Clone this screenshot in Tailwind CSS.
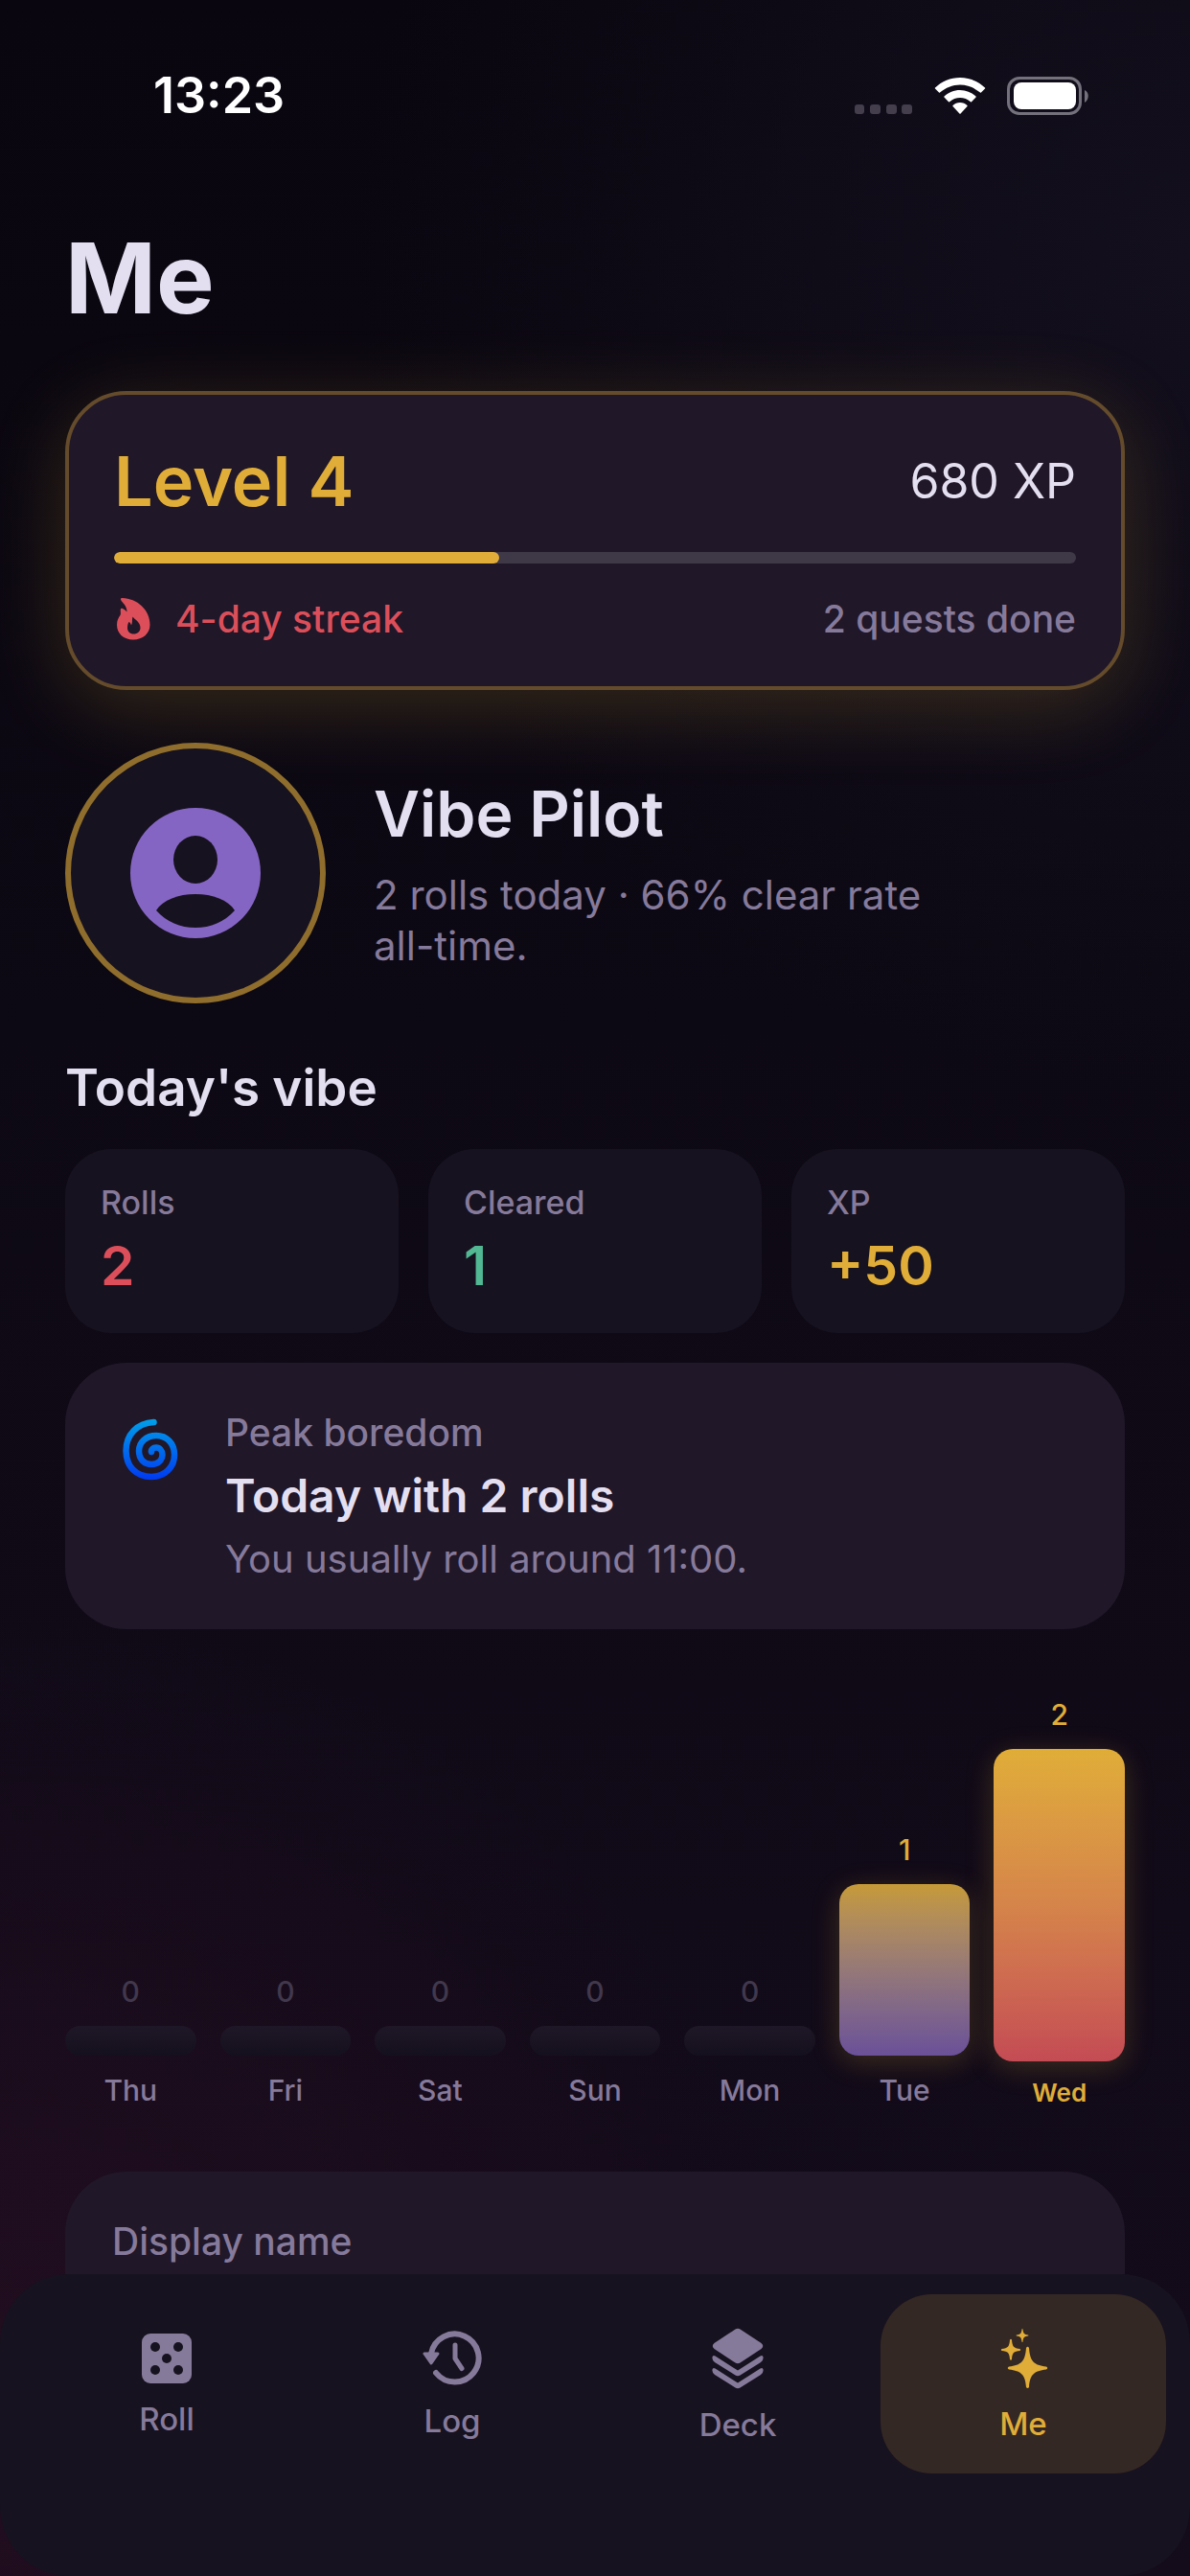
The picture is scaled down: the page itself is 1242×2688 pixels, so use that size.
<!DOCTYPE html>
<html lang="en">
<head>
    <meta charset="UTF-8">
    <meta name="viewport" content="width=device-width, initial-scale=1.0">
    <title>Me</title>
    <script src="https://cdn.jsdelivr.net/npm/@tailwindcss/browser@4"></script>
</head>
<body class="bg-[#0d0914] font-['Inter','Liberation_Sans',sans-serif] text-[#e4dff0]">

    <div class="flex h-screen flex-col overflow-hidden bg-[radial-gradient(circle_at_0%_94%,#220e20_0%,transparent_30%),radial-gradient(circle_at_100%_10%,#130f1d_0%,transparent_32%),linear-gradient(to_bottom,#09060f,#0d0914_40%,#140b1b)]">

      <!-- status bar -->
      <header class="flex shrink-0 items-center justify-between pt-[68px] pr-[105px] pl-40 text-white">
        <time class="text-[52px] leading-[64px] font-semibold">13:23</time>
        <div class="flex items-center gap-[22px]">
          <svg class="h-10 w-[62px]" viewBox="0 0 62 40" fill="#433d4c">
            <rect x="1" y="29" width="10" height="10" rx="3"/>
            <rect x="17" y="29" width="11" height="10" rx="3"/>
            <rect x="34" y="29" width="11" height="10" rx="3"/>
            <rect x="50" y="29" width="11" height="10" rx="3"/>
          </svg>
          <svg class="h-10 w-[54px]" viewBox="0 0 54 40" fill="#fff">
            <path d="M27 1C37 1 46 5 53 11.500Q53.500 12 53 12.600L49 16.600Q48.500 17 48 16.600C42 11.500 35 8.500 27 8.500S12 11.500 6 16.600Q5.500 17 5 16.600L1 12.600Q.5 12 1 11.500C8 5 17 1 27 1z"/>
            <path d="M27 14C33.500 14 39 16.500 43.500 20.500Q44 21 43.500 21.600L39 26.200Q38.500 26.600 38 26.200C35 23.600 31 22 27 22S19 23.600 16 26.200Q15.500 26.600 15 26.200L10.500 21.600Q10 21 10.500 20.500C15 16.500 20.500 14 27 14z"/>
            <path d="M27 27C30 27 32.500 28 34.500 30Q34.900 30.500 34.500 31L27.600 38.500Q27 39 26.400 38.500L19.500 31Q19 30.500 19.500 30C21.500 28 24 27 27 27z"/>
          </svg>
          <svg class="h-10 w-[86px]" viewBox="0 0 86 40">
            <rect x="1.500" y="1.500" width="75" height="37" rx="11.500" fill="none" stroke="#75717c" stroke-width="3"/>
            <rect x="7" y="6" width="65" height="28" rx="8" fill="#fff"/>
            <path d="M81 14C86 16 86 24 81 27z" fill="#75717c"/>
          </svg>
        </div>
      </header>

      <main class="flex-1 overflow-y-auto px-[68px] [scrollbar-width:none]">
        <h1 class="mt-[92px] text-[102px] leading-[132px] font-bold">Me</h1>

        <!-- level card -->
        <section class="mt-[52px] rounded-[64px] border-4 border-[#644b2b] bg-[#201728] px-[47px] pt-[42px] pb-[44px] shadow-[0_18px_84px_rgba(224,173,56,0.2)]">
          <div class="flex items-center justify-between">
            <h2 class="text-[72px] leading-[96px] font-semibold text-[#e0ad38]">Level 4</h2>
            <p class="text-[50px] leading-[64px]">680 XP</p>
          </div>
          <div class="mt-[26px] h-3 overflow-hidden rounded-full bg-[#3f3947]">
            <div class="h-full rounded-full bg-[#e0ad38]" style="width: 40%"></div>
          </div>
          <div class="mt-[32px] flex items-center justify-between text-[39px] leading-[52px] font-medium">
            <p class="flex items-center gap-[24px] text-[#dc4f5a]">
              <svg class="h-[46px] w-[40px]" viewBox="0 0 40 46" fill="currentColor" fill-rule="evenodd">
                <path d="M8.500 1C24 1.500 37.500 13 37.500 29C37.500 38 30 44.500 20 44.500S3 38 3 29C3 24 5 21 6.500 19C7.500 17 6.500 15 6.800 13C7.200 11 9.500 11.500 13.500 15.500C13.500 10 10.500 7.500 8 4.500C6.500 2.500 6.500 1 8.500 1zM19.500 20.500C22 24 27.500 26 27.500 32C27.500 36 24.500 38.500 20.500 38.500S14 36 14 32C14 29.500 14.500 27.500 15.500 26C17 26.500 17.500 28 18 29.500C19.500 27 18.500 24 19.500 20.500z"/>
              </svg>
              4-day streak
            </p>
            <p class="text-[#867a9b]">2 quests done</p>
          </div>
        </section>

        <!-- profile -->
        <section class="mt-[55px] flex items-center gap-[50px]">
          <div class="flex size-[272px] shrink-0 items-center justify-center rounded-full border-[6px] border-[#8f6d2c] bg-[#17121f]">
            <svg class="size-[136px]" viewBox="0 0 136 136">
              <circle cx="68" cy="68" r="68" fill="#8565c4"/>
              <ellipse cx="68" cy="54" rx="23" ry="25" fill="#17121f"/>
              <path d="M27 107C34 96 50 90 68 90S102 96 109 107C98 119 84 125 68 125S38 119 27 107z" fill="#17121f"/>
            </svg>
          </div>
          <div class="max-w-[600px]">
            <h2 class="text-[66px] leading-[80px] font-semibold">Vibe Pilot</h2>
            <p class="mt-[18px] text-[42px] leading-[53px] text-[#867a9b]">2 rolls today · 66% clear rate all-time.</p>
          </div>
        </section>

        <h2 class="mt-[54px] text-[53px] leading-[68px] font-semibold">Today's vibe</h2>

        <div class="mt-[30px] grid grid-cols-3 gap-[31px]">
          <div class="rounded-[48px] bg-[#17121f] px-[37px] py-[34px]">
            <p class="text-[34px] leading-[44px] font-medium text-[#867a9b]">Rolls</p>
            <p class="mt-[8px] text-[57px] leading-[72px] font-semibold text-[#dc4f5a]">2</p>
          </div>
          <div class="rounded-[48px] bg-[#17121f] px-[37px] py-[34px]">
            <p class="text-[34px] leading-[44px] font-medium text-[#867a9b]">Cleared</p>
            <p class="mt-[8px] text-[57px] leading-[72px] font-semibold text-[#51b893]">1</p>
          </div>
          <div class="rounded-[48px] bg-[#17121f] px-[37px] py-[34px]">
            <p class="text-[34px] leading-[44px] font-medium text-[#867a9b]">XP</p>
            <p class="mt-[8px] text-[57px] leading-[72px] font-semibold text-[#e0ad38]">+50</p>
          </div>
        </div>

        <!-- peak boredom -->
        <section class="mt-[31px] flex gap-[48px] rounded-[64px] bg-[#201728] px-[59px] py-[47px]">
          <svg class="mt-[10px] h-[68px] w-[60px] shrink-0" viewBox="0 0 60 68" fill="none" stroke="url(#cyclone)" stroke-width="6.500" stroke-linecap="round">
            <defs>
              <linearGradient id="cyclone" gradientUnits="userSpaceOnUse" x1="0" y1="2" x2="0" y2="66">
                <stop stop-color="#00a0e8"/>
                <stop offset="1" stop-color="#0038f0"/>
              </linearGradient>
            </defs>
            <path d="M33.500 5C16 6 4.500 18 4.500 35C4.500 51 15 62 31 62C45 62 55 52 55 39C55 27 47 19 36 19C25.500 19 18 26 18 35C18 43.500 23.500 49 31 49C38 49 42.500 44.500 42.500 39C42.500 34.500 39.500 31.500 36 31.500C32.500 31.500 30.500 34 31 36"/>
          </svg>
          <div>
            <p class="text-[39px] leading-[52px] font-medium text-[#867a9b]">Peak boredom</p>
            <h3 class="mt-[8px] text-[48px] leading-[64px] font-semibold">Today with 2 rolls</h3>
            <p class="mt-[8px] text-[40px] leading-[52px] text-[#867a9b]">You usually roll around 11:00.</p>
          </div>
        </section>

        <!-- weekly chart -->
        <section class="mt-[61px] grid h-[440px] grid-cols-7 items-end gap-[25px] text-center text-[30px] leading-[40px] font-medium text-[#867a9b]">
          <div>
            <p class="text-[#41384d]">0</p>
            <div class="my-[16px] h-[31px] rounded-[16px] bg-linear-to-b from-[#1e1727] to-[#15101d]"></div>
            <p>Thu</p>
          </div>
          <div>
            <p class="text-[#41384d]">0</p>
            <div class="my-[16px] h-[31px] rounded-[16px] bg-linear-to-b from-[#1e1727] to-[#15101d]"></div>
            <p>Fri</p>
          </div>
          <div>
            <p class="text-[#41384d]">0</p>
            <div class="my-[16px] h-[31px] rounded-[16px] bg-linear-to-b from-[#1e1727] to-[#15101d]"></div>
            <p>Sat</p>
          </div>
          <div>
            <p class="text-[#41384d]">0</p>
            <div class="my-[16px] h-[31px] rounded-[16px] bg-linear-to-b from-[#1e1727] to-[#15101d]"></div>
            <p>Sun</p>
          </div>
          <div>
            <p class="text-[#41384d]">0</p>
            <div class="my-[16px] h-[31px] rounded-[16px] bg-linear-to-b from-[#1e1727] to-[#15101d]"></div>
            <p>Mon</p>
          </div>
          <div>
            <p class="text-[#e0ad38]">1</p>
            <div class="my-[16px] h-[179px] rounded-[20px] bg-linear-to-b from-[#c69a36] to-[#6b5098] shadow-[0_6px_30px_rgba(224,173,56,0.22)]"></div>
            <p>Tue</p>
          </div>
          <div class="text-[#e0ad38]">
            <p>2</p>
            <div class="my-[16px] h-[326px] rounded-[20px] bg-linear-to-b from-[#e0ad38] via-[#d5844a] to-[#c44b54] shadow-[0_6px_30px_rgba(224,173,56,0.22)]"></div>
            <p class="text-[26px] leading-[34px] font-semibold">Wed</p>
          </div>
        </section>

        <form class="mt-[65px] rounded-[64px] bg-[#201728] px-[49px] py-[47px]">
          <label for="display-name" class="block text-[39px] leading-[52px] font-medium text-[#867a9b]">Display name</label>
          <input id="display-name" name="display-name" type="text" class="mt-6 block h-24 w-full rounded-[32px] bg-[#17121f] px-8 text-[48px]">
        </form>
      </main>

      <!-- tab bar -->
      <nav class="grid h-[315px] shrink-0 grid-cols-4 items-start rounded-[72px] bg-[#17121f] px-[25px] pt-[21px] text-[33px] leading-[40px] font-medium text-[#867a9b]">
        <a href="#" class="flex h-[187px] flex-col items-center justify-center gap-4 rounded-[54px] pt-[2px]">
          <svg class="h-[54px] w-[54px]" viewBox="0 0 54 54">
            <rect x="1" y="1" width="52" height="52" rx="9" fill="currentColor"/>
            <g fill="#17121f">
              <circle cx="15" cy="15" r="5"/>
              <circle cx="39" cy="15" r="5"/>
              <circle cx="27" cy="27" r="5"/>
              <circle cx="15" cy="39" r="5"/>
              <circle cx="39" cy="39" r="5"/>
            </g>
          </svg>
          Roll
        </a>
        <a href="#" class="flex h-[187px] flex-col items-center justify-center gap-4 rounded-[54px] pt-[2px]">
          <svg class="h-[58px] w-[62px]" viewBox="0 0 62 58" fill="none" stroke="currentColor" stroke-linecap="round" stroke-linejoin="round">
            <path d="M9 24A25 25 0 1 1 14 44" stroke-width="6"/>
            <path d="M34 15V29L41 39.500" stroke-width="5"/>
            <path d="M2 24H16L9 34z" fill="currentColor" stroke-width="3"/>
          </svg>
          Log
        </a>
        <a href="#" class="flex h-[187px] flex-col items-center justify-center gap-4 rounded-[54px] pt-[2px]">
          <svg class="h-[66px] w-[54px]" viewBox="0 0 54 66" fill="currentColor">
            <path d="M24.500 2.500Q27 1 29.500 2.500L51.500 17Q55 20 51.500 23L29.500 37.500Q27 39 24.500 37.500L2.500 23Q-1 20 2.500 17z"/>
            <path d="M.5 31.500Q1 29 3.500 30.500L27 45.500L50.500 30.500Q53 29 53.500 31.500Q54 35 51 37L29.500 50.500Q27 52 24.500 50.500L3 37Q0 35 .5 31.500z"/>
            <path d="M.5 44.500Q1 42 3.500 43.500L27 58.500L50.500 43.500Q53 42 53.500 44.500Q54 48 51 50L29.500 63.500Q27 65 24.500 63.500L3 50Q0 48 .5 44.500z"/>
          </svg>
          Deck
        </a>
        <a href="#" aria-current="page" class="flex h-[187px] flex-col items-center justify-center gap-4 rounded-[54px] bg-[#342824] pt-[2px] text-[#e0ad38]">
          <svg class="h-[64px] w-[54px]" viewBox="0 0 54 64" fill="currentColor">
            <path d="M30 21Q31.500 18.500 33 21C34 35 38 39 51 40.500Q53.500 42 51 43.500C38 45 34 49 33 62Q31.500 64 30 62C29 49 25 45 12 43.500Q9.500 42 12 40.500C25 39 29 35 30 21z"/>
            <path d="M13 12.500Q14 11 15 12.500C15.500 19.500 17 21.500 23.500 22Q25 23 23.500 24C17 24.500 15.500 26 15 33Q14 34.500 13 33C12.500 26 11 24.500 4.500 24Q3 23 4.500 22C11 21.500 12.500 19.500 13 12.500z"/>
            <path d="M25.500 1.500Q26 .5 26.500 1.500C27 6 28 7 32 7.500Q33 8 32 8.500C28 9 27 10 26.500 14.500Q26 15.500 25.500 14.500C25 10 24 9 20 8.500Q19 8 20 7.500C24 7 25 6 25.500 1.500z"/>
          </svg>
          Me
        </a>
      </nav>
    </div>

</body>
</html>
